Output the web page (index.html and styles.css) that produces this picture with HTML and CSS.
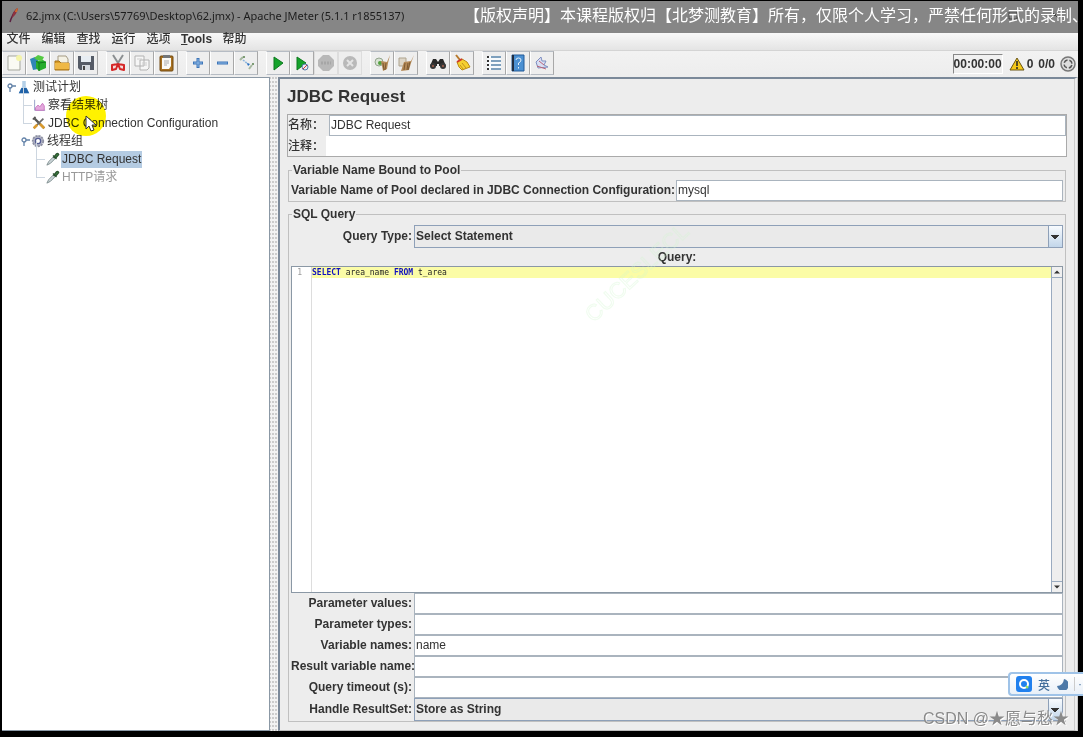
FILE: index.html
```html
<!DOCTYPE html>
<html lang="zh-CN">
<head>
<meta charset="utf-8">
<title>62.jmx - Apache JMeter</title>
<link rel="stylesheet" href="styles.css">
</head>
<body>
<svg class="defs" aria-hidden="true">
  <symbol id="dropper" viewBox="0 0 16 16"><path d="M1 15 3 11 9 5 11 7 5 13Z" fill="#c9d3d6" stroke="#7b8a8c"/><path d="M8 4 12 8M9 6 12 2Q14 1 14.500 3L11 7Z" fill="#3d8a3f" stroke="#2c5230" stroke-width="1.500"/></symbol>
  <symbol id="handle" viewBox="0 0 10 10"><circle cx="4" cy="4" r="2" fill="#fff" stroke="#6382a8" stroke-width="1.300"/><path d="M4 6V10M6 4H10" stroke="#6382a8" stroke-width="1.300"/></symbol>
</svg>
<div class="window">
  <header class="title-bar">
    <svg class="feather" viewBox="0 0 12 16"><path d="M9 2Q5 6 3 12L2 15" fill="none" stroke="#5a2140" stroke-width="1.500"/><path d="M10 1Q5 3 4 11Q9 7 10 1Z" fill="#8e3340"/><path d="M10 1Q7 2 7 5L9 5Z" fill="#d26a2c"/></svg>
    <h1 class="window-title">62.jmx (C:\Users\57769\Desktop\62.jmx) - Apache JMeter (5.1.1 r1855137)</h1>
    <svg class="controls" viewBox="0 0 60 12"><path d="M3 3H11V10H3ZM45 2 53 10M53 2 45 10" fill="none" stroke="#444"/></svg>
  </header>
  <nav class="menu-bar">
    <button>文件</button><button>编辑</button><button>查找</button><button>运行</button><button>选项</button><button><u>T</u>ools</button><button>帮助</button>
  </nav>
  <div class="toolbar">
    <div class="group">
      <button class="tool" aria-label="New"><svg viewBox="0 0 18 18"><path d="M3 2H15V16H3Z" fill="#fafaf4" stroke="#a5a79d"/><circle cx="14" cy="4" r="3" fill="#f4f4a8"/></svg></button>
      <button class="tool" aria-label="Templates"><svg viewBox="0 0 18 18"><path d="M1 5 6 3 9 6V15L4 16Z" fill="#2f86b5"/><path d="M7 7 14 6 17 8V14L10 17 7 14Z" fill="#27ad2d"/><path d="M7 7 10 9V17M10 9 17 8" stroke="#107a1b" fill="none"/><path d="M5 4 9 1 15 3 13 7 8 6Z" fill="#55c943"/></svg></button>
      <button class="tool" aria-label="Open"><svg viewBox="0 0 18 18"><path d="M5 2H13L15 5V11H5Z" fill="#f4f1e4" stroke="#a49b83"/><path d="M2 7H6L8 9H16V16H2Z" fill="#d89d27" stroke="#a87319"/><path d="M2 9H16V15H2Z" fill="#efb846"/></svg></button>
      <button class="tool" aria-label="Save"><svg viewBox="0 0 18 18"><path d="M1 2H17V16H3L1 14Z" fill="#555b66"/><path d="M4 2H14V8H4Z" fill="#e7edf3"/><path d="M5 11H13V16H5Z" fill="#d5dae0"/><path d="M7 12V16" stroke="#444" stroke-width="2"/></svg></button>
    </div>
    <div class="group">
      <button class="tool" aria-label="Cut"><svg viewBox="0 0 18 18"><path d="M4 1 11 12M14 1 7 12" stroke="#8b8f91" stroke-width="2"/><path d="M9 10 3 11 3 16 7 15ZM9 10 15 11 15 16 11 15Z" fill="#f3dada" stroke="#d52626" stroke-width="2" stroke-linejoin="round"/></svg></button>
      <button class="tool" aria-label="Copy"><svg viewBox="0 0 18 18"><path d="M2 2H11V12H2ZM7 6H16V14L14 16H7Z" fill="#f6f6f6" stroke="#b2b2b2"/><path d="M9 9H14M9 11H14M4 5H9" stroke="#ccc"/></svg></button>
      <button class="tool" aria-label="Paste"><svg viewBox="0 0 18 18"><rect x="3" y="2" width="13" height="15" rx="1" fill="#a7701f" stroke="#704810"/><path d="M5 4H14V12L12 15H5Z" fill="#fbfbf7"/><path d="M6 1H13V4H6Z" fill="#73777a"/><path d="M7 7H12M7 9H12M7 11H10" stroke="#aaa"/></svg></button>
    </div>
    <div class="group">
      <button class="tool" aria-label="Expand all"><svg viewBox="0 0 18 18"><path d="M9 4V14M4 9H14" stroke="#3d75b8" stroke-width="3"/><path d="M9 5V13M5 9H13" stroke="#8fbbe8"/></svg></button>
      <button class="tool" aria-label="Collapse all"><svg viewBox="0 0 18 18"><path d="M4 9H15" stroke="#3d75b8" stroke-width="3"/><path d="M5 9H14" stroke="#8fbbe8"/></svg></button>
      <button class="tool" aria-label="Toggle"><svg viewBox="0 0 18 18"><path d="M3 6 6 3M12 15 15 11" stroke="#a6b8a0" stroke-width="2"/><path d="M6 6 12 11" stroke="#8bb4de" stroke-width="1.500" stroke-dasharray="2 1"/><path d="M10 9 13 10 11 12Z" fill="#2870bf"/><circle cx="7" cy="3" r="1" fill="#59804c"/><circle cx="16" cy="10" r="1" fill="#59804c"/></svg></button>
    </div>
    <div class="group">
      <button class="tool" aria-label="Start"><svg viewBox="0 0 18 18"><path d="M5 3 14 9 5 16Z" fill="#15a32b" stroke="#0c7a1e"/></svg></button>
      <button class="tool" aria-label="Start no pauses"><svg viewBox="0 0 18 18"><path d="M4 3 13 9 4 16Z" fill="#15a32b" stroke="#0c7a1e"/><circle cx="12" cy="13" r="3" fill="#e4ecf5" stroke="#5878a8"/><path d="M10 15 14 11" stroke="#d33"/></svg></button>
      <button class="tool" aria-label="Stop" disabled><svg viewBox="0 0 18 18"><path d="M6 1H12L17 6V12L12 17H6L1 12V6Z" fill="#b8b8b8"/><path d="M4 9H14" stroke="#a6a6a6" stroke-width="3" stroke-dasharray="2 1"/></svg></button>
      <button class="tool" aria-label="Shutdown" disabled><svg viewBox="0 0 18 18"><circle cx="9" cy="9" r="7" fill="#b9b9b9"/><path d="M6 6 12 12M12 6 6 12" stroke="#e4e4e4" stroke-width="2"/></svg></button>
    </div>
    <div class="group">
      <button class="tool" aria-label="Clear"><svg viewBox="0 0 18 18"><circle cx="6" cy="8" r="4" fill="#d9e3d5" stroke="#94a58d"/><circle cx="7" cy="9" r="2" fill="#53a13f"/><path d="M17 1 14 8 8 7 10 17 14 15 15 9Z" fill="#b58a58"/><path d="M10 9 11 16M13 9 12 16" stroke="#7c5a32"/></svg></button>
      <button class="tool" aria-label="Clear all"><svg viewBox="0 0 18 18"><path d="M2 4H9V12H2Z" fill="#ddd6c8" stroke="#afa48f"/><path d="M17 1 14 7 7 8 4 17 12 16 14 9Z" fill="#b58a58"/><path d="M8 9 7 16M11 9 10 16M13 8 11 16" stroke="#7c5a32"/></svg></button>
    </div>
    <div class="group">
      <button class="tool" aria-label="Search"><svg viewBox="0 0 18 18"><path d="M4 5H7L9 8 11 5H14L17 12H10V10H8V12H1Z" fill="#292929"/><circle cx="4" cy="12" r="3" fill="#373737"/><circle cx="14" cy="12" r="3" fill="#373737"/><circle cx="4" cy="12" r="1" fill="#a9624d"/><circle cx="14" cy="12" r="1" fill="#a9624d"/></svg></button>
      <button class="tool" aria-label="Reset search"><svg viewBox="0 0 18 18"><path d="M3 1 7 6" stroke="#b7792c" stroke-width="2"/><path d="M4 8 9 5 14 8 17 13 9 16 6 13Z" fill="#f5d02f" stroke="#b98a14"/><path d="M4 8 9 5" stroke="#cf382c" stroke-width="2"/><path d="M9 9 13 14M7 11 10 15" stroke="#c4931b"/></svg></button>
    </div>
    <div class="group">
      <button class="tool" aria-label="Function helper"><svg viewBox="0 0 18 18"><path d="M2 2H16V16H2Z" fill="#f7fafc"/><path d="M6 3H16M6 7H16M6 11H16M6 15H16" stroke="#7ea0bd" stroke-width="2"/><path d="M3 2V16" stroke="#333" stroke-width="2" stroke-dasharray="2 2"/></svg></button>
      <button class="tool" aria-label="Help"><svg viewBox="0 0 18 18"><path d="M3 1H15V17H3Z" fill="#4b90d2" stroke="#235b99"/><path d="M4 1V17" stroke="#202d40" stroke-width="2"/><path d="M7 6Q7 4 9.500 4T12 6Q12 8 9.500 9V11M9.500 13V14.500" fill="none" stroke="#e5f1fb"/></svg></button>
      <button class="tool" aria-label="Undo"><svg viewBox="0 0 18 18"><path d="M3 8 8 3 9 7 13 7 11 11 15 13 5 14Z" fill="#d7def3" stroke="#7f8fc1"/><path d="M4 12 13 15M6 7 11 11" stroke="#bb6579"/></svg></button>
    </div>
    <div class="status">
      <output class="timer">00:00:00</output>
      <svg class="warning" viewBox="0 0 16 16"><path d="M8 2 15 14H1Z" fill="#f5c819" stroke="#695513"/><path d="M8 5V10M8 11V13" stroke="#222" stroke-width="1.500"/></svg>
      <span>0</span><span class="threads">0/0</span>
      <svg class="target" viewBox="0 0 16 16"><circle cx="8" cy="8" r="7" fill="#ddd" stroke="#777" stroke-width="1.500"/><circle cx="8" cy="8" r="4" fill="none" stroke="#555" stroke-width="1.500" stroke-dasharray="4.283 2" stroke-dashoffset="-1"/></svg>
    </div>
  </div>
  <main class="workspace">
    <aside class="tree-pane">
      <ul class="tree">
        <li class="node"><svg class="knob"><use href="#handle"/></svg><svg class="icon" viewBox="0 0 16 16"><path d="M6 1H10V7L14 15H2L6 7Z" fill="#b4d0e8"/><path d="M5 9H11L14 15H2Z" fill="#1f62a8"/></svg><span>测试计划</span></li>
        <li class="node level-one branch"><svg class="icon" viewBox="0 0 16 16"><path d="M3 2V14H15" fill="none" stroke="#8c97c2"/><path d="M4 14V11L7 8 9 10 12 6 14 9V14Z" fill="#e3a8dc" stroke="#c66fbd"/></svg><span>察看结果树</span></li>
        <li class="node level-one branch"><svg class="icon" viewBox="0 0 16 16"><path d="M3 3 14 14" stroke="#555" stroke-width="2.500"/><path d="M13 3 2 14" stroke="#6a6a6a" stroke-width="2"/><path d="M9 9 14 14M2 14 6 10" stroke="#d99a2e" stroke-width="3"/><path d="M1 4 4 1" stroke="#555" stroke-width="2"/></svg><span>JDBC Connection Configuration</span></li>
        <li class="node level-one"><svg class="knob"><use href="#handle"/></svg><svg class="icon" viewBox="0 0 16 16"><circle cx="8" cy="8" r="6" fill="#b4b7c8" stroke="#8d90a2" stroke-width="2" stroke-dasharray="2.500 1"/><circle cx="8" cy="8" r="3" fill="#fff" stroke="#555c92" stroke-width="1.500"/></svg><span>线程组</span></li>
        <li class="node level-two branch"><svg class="icon"><use href="#dropper"/></svg><span class="selected">JDBC Request</span></li>
        <li class="node level-two branch"><svg class="icon"><use href="#dropper"/></svg><span class="muted">HTTP请求</span></li>
      </ul>
      <div class="spotlight"></div>
      <svg class="pointer" viewBox="0 0 12 18"><path d="M1 1V14L4 11 6 16 9 15 7 10H11Z" fill="#fff" stroke="#333"/></svg>
    </aside>
    <div class="divider"></div>
    <section class="editor-pane">
      <h2 class="heading">JDBC Request</h2>
      <div class="identity">
        <div class="identity-row"><label for="name">名称：</label><input id="name" class="field" value="JDBC Request"></div>
        <div class="identity-row comment"><label for="comment">注释：</label><input id="comment" class="field plain"></div>
      </div>
      <fieldset class="box pool">
        <legend>Variable Name Bound to Pool</legend>
        <div class="pool-row"><label for="pool">Variable Name of Pool declared in JDBC Connection Configuration:</label><input id="pool" class="field" value="mysql"></div>
      </fieldset>
      <fieldset class="box sql">
        <legend>SQL Query</legend>
        <div class="sql-body">
          <div class="form-row type"><label for="type">Query Type:</label><select id="type" class="combo"><option>Select Statement</option></select></div>
          <div class="query-label" id="query-label">Query:</div>
          <div class="code" role="textbox" aria-multiline="true" aria-labelledby="query-label" tabindex="0">
            <div class="gutter">1</div>
            <pre class="source"><code class="line"><b>SELECT</b> area_name <b>FROM</b> t_area</code></pre>
            <div class="scroll"><button aria-label="Scroll up"><svg viewBox="0 0 8 4"><path d="M0 4 4 0 8 4Z"/></svg></button><button aria-label="Scroll down"><svg viewBox="0 0 8 4"><path d="M0 0H8L4 4Z"/></svg></button></div>
          </div>
          <div class="form-row"><label for="values">Parameter values:</label><input id="values" class="field"></div>
          <div class="form-row"><label for="types">Parameter types:</label><input id="types" class="field"></div>
          <div class="form-row"><label for="variables">Variable names:</label><input id="variables" class="field" value="name"></div>
          <div class="form-row"><label for="result">Result variable name:</label><input id="result" class="field"></div>
          <div class="form-row"><label for="timeout">Query timeout (s):</label><input id="timeout" class="field"></div>
          <div class="form-row type"><label for="handle-set">Handle ResultSet:</label><select id="handle-set" class="combo"><option>Store as String</option></select></div>
        </div>
      </fieldset>
      <div class="ghost">CUCESLECL</div>
    </section>
  </main>
</div>
<div class="notice">【版权声明】本课程版权归【北梦测教育】所有，仅限个人学习，严禁任何形式的录制、</div>
<div class="ime">
  <svg class="ime-logo" viewBox="0 0 16 16"><rect width="16" height="16" rx="3" fill="#2080ee"/><circle cx="8" cy="8" r="4" fill="none" stroke="#fff" stroke-width="2"/><path d="M10 10 12 12" stroke="#8fe05d" stroke-width="2"/></svg>
  <span>英</span>
  <svg class="moon" viewBox="0 0 12 12"><path d="M8 1A6 6 0 1 1 1 8Q7 8 8 1Z" fill="#4d79a8"/></svg>
  <span class="ime-more">·</span>
</div>
<div class="credit">CSDN @★愿与愁★</div>
</body>
</html>
```
FILE: styles.css
```css
* { box-sizing: border-box; }
body {
  margin: 0;
  height: 100vh;
  padding: 1px 5px 6px 2px;
  background: #000;
  color: #333;
  font: 12px "Liberation Sans", "Noto Sans CJK SC", sans-serif;
  position: relative;
  overflow: hidden;
}
button, input, select { font: inherit; color: inherit; margin: 0; padding: 0; border-radius: 0; }
.defs { position: absolute; width: 0; height: 0; }
.window { height: 100%; display: flex; flex-direction: column; background: #ededed; }

.title-bar { height: 32px; flex: none; display: flex; align-items: center; gap: 6px; padding: 0 12px 4px 6px; background: #868686; }
.feather { width: 12px; height: 16px; }
.window-title { margin: 0; flex: 1; font: 11px "Noto Sans", "Open Sans", sans-serif; color: #1c1c1c; white-space: nowrap; }
.controls { width: 60px; height: 12px; }
.notice { position: absolute; top: 2px; left: 464px; font: 16px/24px "Noto Sans CJK SC", sans-serif; color: #fff; white-space: nowrap; }

.menu-bar { height: 17px; flex: none; display: flex; gap: 10px; padding: 0 4px; background: linear-gradient(#f8f8f8, #e4e4e4); }
.menu-bar button { border: 0; background: none; font: 500 12px/10px "Liberation Sans", "Noto Sans CJK SC", sans-serif; padding-bottom: 6px; min-width: 25px; }
.menu-bar button:nth-child(6) { font-weight: bold; }

.toolbar { height: 27px; flex: none; display: flex; gap: 8px; background: linear-gradient(#f2f2f2, #ededed); border-top: 1px solid #d4d4d4; }
.group { display: flex; }
.tool { width: 24px; height: 24px; display: grid; place-items: center; border: 1px solid #b6bcc4; border-left-color: #fff; border-right-color: #a8a8a8; background: #eee; }
.tool svg { width: 18px; height: 18px; }
.tool:disabled { border-color: #ddd; }
.status { margin-left: auto; display: flex; align-items: center; font-weight: bold; }
.timer { height: 20px; line-height: 19px; border: 1px solid #fff; border-top-color: #888; border-left-color: #888; margin-right: 6px; }
.warning { width: 16px; height: 16px; margin-right: 2px; }
.threads { margin: 0 5px; }
.target { width: 16px; height: 16px; margin-right: 2px; }

.workspace { flex: 1; min-height: 0; display: flex; }
.tree-pane { width: 268px; flex: none; position: relative; background: #fff; border: 1px solid #8b98a5; border-left: 0; }
.tree { list-style: none; margin: 0; padding: 0 0 0 4px; }
.node { height: 18px; display: flex; align-items: center; position: relative; white-space: nowrap; }
.node .icon { width: 14px; height: 14px; margin-right: 1px; }
.knob { width: 10px; height: 10px; margin-right: 1px; }
.node span { line-height: 17px; padding: 0 1px; }
.level-one { padding-left: 14px; }
.branch::before { content: ""; width: 8px; height: 18px; margin: -9px 0 9px; border: solid #cdd6e0; border-width: 0 0 1px 1px; }
.level-one.branch { padding-left: 17px; }
.level-two.branch { padding-left: 30px; }
.level-two.branch::before { margin-right: 1px; }
.selected { background: #b4cbe2; }
.muted { color: #999; }
.spotlight { position: absolute; left: 64px; top: 18px; width: 40px; height: 40px; border-radius: 50%; background: #fff200; mix-blend-mode: multiply; }
.pointer { position: absolute; left: 83px; top: 37px; width: 12px; height: 18px; }
.divider { width: 8px; flex: none; background: radial-gradient(circle at 1px 1px, #ccc 1px, transparent 1px) 2px 0 / 3px 4px #f2f2f2; }

.editor-pane { flex: 1; min-width: 0; display: flex; flex-direction: column; position: relative; padding: 7px 6px 8px 7px; border: 2px solid #7b8999; border-right: 4px double #ccc; border-bottom: 1px solid #bbb; }
.heading { margin: 0 0 6px; font-size: 17px; line-height: 22px; }
.identity { border: 1px solid #aaa; margin-right: 1px; }
.identity-row { display: flex; height: 21px; }
.identity-row label { width: 41px; line-height: 20px; font-weight: 500; white-space: nowrap; }
.comment { height: 20px; }
.comment label { width: 38px; }
.field { flex: 1; min-width: 0; height: 100%; padding: 0 1px 1px; background: #fff; border: 1px solid #aab4be; outline: 0; }
.plain { border: 0; }
.box { margin: 6px 2px 0 1px; padding: 0 2px; border: 1px solid #c0c0c0; min-width: 0; font-weight: bold; }
.box legend { padding: 0 1px; margin-left: 1px; line-height: 14px; }
.box .field { font-weight: normal; }
.pool-row { display: flex; height: 24px; padding-top: 3px; line-height: 21px; }
.pool-row label { margin-right: 1px; }
.sql { flex: 1; min-height: 0; margin-top: 5px; }
.sql-body { height: 100%; padding-top: 4px; display: flex; flex-direction: column; }
.form-row { display: flex; height: 21px; flex: none; }
.form-row label { width: 123px; padding-right: 2px; text-align: right; line-height: 20px; white-space: nowrap; }
.form-row.type { height: 23px; }
.form-row.type label { line-height: 22px; }
.combo {
  flex: 1; min-width: 0; appearance: none; border: 1px solid #8ea0b8; padding: 0 1px 1px; font-weight: bold; outline: 0;
  background-color: #eaeaea;
  background-image: linear-gradient(to bottom right, #333 50%, transparent 51%), linear-gradient(to bottom left, #333 50%, transparent 51%), linear-gradient(#8ea0b8, #8ea0b8), linear-gradient(#f8fbfe, #c2d6ea);
  background-size: 4px 4px, 4px 4px, 1px 100%, 13px 100%;
  background-position: right 3px center, right 7px center, right 13px top, right top;
  background-repeat: no-repeat;
}
.query-label { line-height: 18px; text-align: center; }
.code { flex: 1; min-height: 0; display: flex; background: #fff; border: 1px solid #8b98a5; }
.gutter { width: 20px; padding-right: 9px; border-right: 1px solid #ddd; color: #999; font: 8px/11px "DejaVu Sans Mono", monospace; text-align: right; }
.source { flex: 1; margin: 0; font: 8px/11px "DejaVu Sans Mono", monospace; color: #222; }
.line { display: block; background: #fbfca6; font: inherit; }
.line b { color: #1010c0; }
.scroll { width: 11px; display: flex; flex-direction: column; justify-content: space-between; border-left: 1px solid #9aabc0; background: #eee; }
.scroll button { height: 11px; border: solid #9aabc0; border-width: 0 0 1px; background: #f0f0f0; display: grid; place-items: center; }
.scroll button:last-child { border-width: 1px 0 0; }
.scroll svg { width: 6px; height: 4px; fill: #333; }
.ghost { position: absolute; left: 291px; top: 181px; font-size: 22px; line-height: 26px; color: transparent; -webkit-text-stroke: 1px rgba(210, 245, 205, .35); transform: rotate(-43deg); pointer-events: none; }

.ime { position: absolute; right: 0; top: 672px; width: 75px; height: 24px; display: flex; align-items: center; gap: 6px; padding-left: 6px; border: 2px solid #9fc3e8; border-right: 0; border-radius: 4px 0 0 4px; background: linear-gradient(#fff, #e9f0f8); color: #45709c; font-weight: 500; white-space: nowrap; }
.ime-logo { width: 16px; height: 16px; flex: none; }
.moon { width: 12px; height: 12px; flex: none; }
.ime-more { border-left: 1px solid #ccc; padding-left: 3px; }
.credit { position: absolute; right: 14px; top: 708px; font: 16px/22px "Liberation Sans", "Noto Sans CJK SC", sans-serif; color: #8a8a8a; text-shadow: 1px 1px 0 #fff; white-space: nowrap; }
```
